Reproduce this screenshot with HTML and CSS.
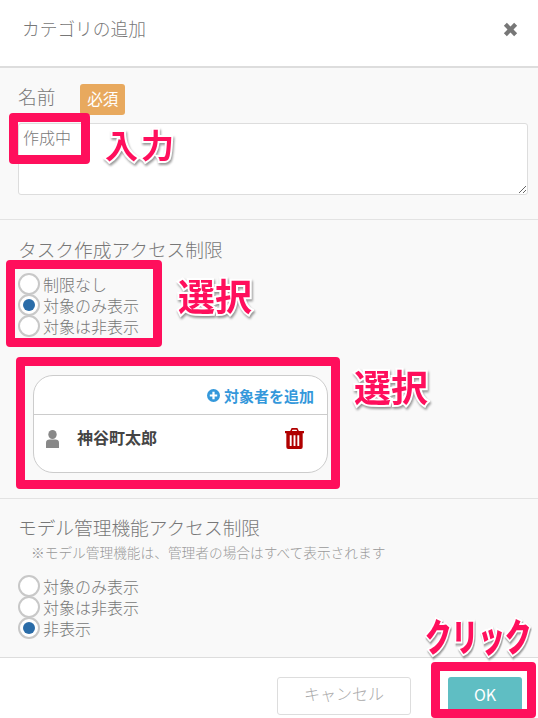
FILE: index.html
```html
<!DOCTYPE html>
<html lang="ja">
<head>
    <meta charset="UTF-8">
    <meta name="viewport" content="width=device-width, initial-scale=1.0">
    <title>カテゴリの追加</title>
    <link rel="stylesheet" href="styles.css">
</head>
<body>
    <div class="modal">
        <div class="modal-header">
            <span class="modal-title">カテゴリの追加</span>
            <svg class="close-icon" viewBox="0 0 14 14"><path d="M0.800 3.600 3.600 0.800 7 4.200l3.400-3.400 2.800 2.800L9.800 7l3.400 3.400-2.800 2.800L7 9.800l-3.400 3.400-2.800-2.800L4.200 7z"/></svg>
        </div>

        <div class="modal-body">
            <!-- Name -->
            <div class="section section-name">
                <div class="name-label">
                    <span class="label">名前</span>
                    <span class="badge">必須</span>
                </div>
                <textarea class="name-input" readonly>作成中</textarea>
            </div>

            <!-- Task access -->
            <div class="section section-task">
                <h3 class="label">タスク作成アクセス制限</h3>
                <div class="radio-row"><span class="radio"></span>制限なし</div>
                <div class="radio-row"><span class="radio checked"></span>対象のみ表示</div>
                <div class="radio-row"><span class="radio"></span>対象は非表示</div>

                <div class="target-card">
                    <div class="target-head">
                        <svg class="plus-icon" viewBox="0 0 14 14"><circle cx="7" cy="7" r="7"/><path class="plus-bar" d="M3 5.800h2.800V3h2.400v2.800H11v2.400H8.200V11H5.800V8.200H3z"/></svg>
                        <span>対象者を追加</span>
                    </div>
                    <div class="target-row">
                        <svg class="user-icon" viewBox="0 0 13 18"><ellipse cx="6.500" cy="4.500" rx="4.200" ry="4.500"/><path d="M0 18v-5.500C0 10.500 1.500 9.500 3.500 9.500h6c2 0 3.500 1 3.500 3V18z"/></svg>
                        <span class="target-name">神谷町太郎</span>
                        <svg class="trash-icon" viewBox="0 0 20 22"><path fill-rule="evenodd" d="M7 0h6l1.600 3H20v2.400h-1.400V20a2 2 0 0 1-2 2H3.400a2 2 0 0 1-2-2V5.400H0V3h5.400zM7.900 1.900 7.300 3h5.400l-.6-1.100zM5 7.500V19h2V7.500zM9 7.500V19h2V7.500zM13 7.500V19h2V7.500z"/></svg>
                    </div>
                </div>
            </div>

            <!-- Model access -->
            <div class="section section-model">
                <h3 class="label">モデル管理機能アクセス制限</h3>
                <p class="note">※モデル管理機能は、管理者の場合はすべて表示されます</p>
                <div class="radio-row"><span class="radio"></span>対象のみ表示</div>
                <div class="radio-row"><span class="radio"></span>対象は非表示</div>
                <div class="radio-row"><span class="radio checked"></span>非表示</div>
            </div>
        </div>

        <div class="modal-footer">
            <button class="btn btn-cancel">キャンセル</button>
            <button class="btn btn-ok">OK</button>
        </div>
    </div>

    <!-- Annotations drawn over the screenshot -->
    <div class="mark mark-name"></div>
    <div class="mark mark-radio"></div>
    <div class="mark mark-card"></div>
    <div class="mark mark-ok"></div>
    <div class="note-text note-input">入力</div>
    <div class="note-text note-select1">選択</div>
    <div class="note-text note-select2">選択</div>
    <div class="note-text note-click">クリック</div>
</body>
</html>
```

FILE: styles.css
```css
* {
    box-sizing: border-box;
    margin: 0;
    padding: 0;
}

body {
    position: relative;
    width: 538px;
    height: 718px;
    overflow: hidden;
    background: white;
    font-family: "Noto Sans CJK JP", "Noto Sans", sans-serif;
    font-weight: 300;
    color: #777;
}

.modal {
    display: flex;
    flex-direction: column;
    height: 718px;
}

.modal-header {
    display: flex;
    justify-content: space-between;
    align-items: center;
    height: 68px;
    padding: 0 20px 8px 22px;
    border-bottom: 2px solid #ddd;
}

.modal-title {
    font-size: 17.700px;
    line-height: 24px;
    margin-bottom: 2px;
}

.close-icon {
    width: 15px;
    height: 15px;
    fill: #777;
}

.modal-body {
    flex: 1;
    display: flex;
    flex-direction: column;
    background: #f9f9f9;
}

.section {
    padding-left: 18px;
    padding-right: 10px;
    border-bottom: 1px solid #e3e3e3;
}

.section-name {
    height: 152px;
    padding-top: 15px;
}

.section-task {
    height: 279px;
    padding-top: 16px;
}

.section-model {
    flex: 1;
    padding-top: 15px;
    border-bottom: none;
}

.name-label {
    display: flex;
    align-items: flex-start;
    gap: 25px;
    height: 40px;
}

.label {
    font-size: 18.700px;
    font-weight: 300;
    line-height: 26px;
}

.badge {
    width: 45px;
    height: 31px;
    margin-top: 1px;
    border-radius: 3px;
    background: #e8a95e;
    color: white;
    font-size: 15.500px;
    font-weight: 400;
    line-height: 28px;
    text-align: center;
}

.name-input {
    display: block;
    width: 510px;
    height: 72px;
    padding: 1px 4px;
    border: 1px solid #ddd;
    border-radius: 3px;
    background: white;
    color: #777;
    font-family: inherit;
    font-size: 16px;
    font-weight: 300;
    line-height: 24px;
    outline: none;
}

.radio-row {
    display: flex;
    align-items: center;
    gap: 3px;
    height: 20.700px;
    font-size: 16px;
    white-space: nowrap;
}

.section-task .label {
    margin-bottom: 12px;
}

.radio {
    position: relative;
    flex: none;
    width: 22px;
    height: 22px;
    border: 2px solid #c8c8c8;
    border-radius: 50%;
    background: white;
}

.radio.checked::after {
    content: "";
    position: absolute;
    top: 3px;
    left: 3px;
    width: 12px;
    height: 12px;
    border-radius: 50%;
    background: #2a6ca8;
}

.target-card {
    width: 295px;
    height: 98px;
    margin: 39px 0 0 15px;
    border: 1px solid #ccc;
    border-radius: 20px;
    background: white;
}

.target-head {
    display: flex;
    justify-content: flex-end;
    align-items: center;
    gap: 4px;
    height: 39px;
    padding-right: 13px;
    border-bottom: 1px solid #ccc;
    color: #3498db;
    font-size: 15px;
    font-weight: 700;
}

.plus-icon {
    width: 13px;
    height: 13px;
    fill: #3498db;
}

.plus-icon .plus-bar {
    fill: white;
}

.target-row {
    display: flex;
    align-items: center;
    height: 47px;
    padding-left: 12px;
}

.user-icon {
    width: 13px;
    height: 18px;
    margin-top: 1px;
    fill: #888;
}

.target-name {
    width: 208px;
    margin-left: 18px;
    margin-bottom: 3px;
    color: #444;
    font-size: 16px;
    font-weight: 700;
}

.trash-icon {
    width: 19px;
    height: 21px;
    fill: #b00000;
}

.note {
    margin: 2px 0 14px 13px;
    font-size: 13.700px;
    line-height: 20px;
    color: #999;
}

.modal-footer {
    display: flex;
    height: 61px;
    padding: 19px 0 0 277px;
    border-top: 1px solid #ddd;
    background: white;
}

.btn {
    padding-bottom: 6px;
    font-family: inherit;
    font-size: 16px;
    font-weight: 300;
    border-radius: 3px;
}

.btn-cancel {
    width: 134px;
    height: 38px;
    border: 1px solid #ddd;
    background: white;
    color: #aaa;
}

.btn-ok {
    width: 74px;
    height: 40px;
    margin-left: 37px;
    border: none;
    background: #5fbec3;
    color: white;
    font-weight: 400;
}

/* annotations */
.mark {
    position: absolute;
    border: 9px solid #ff0f5c;
    border-radius: 4px;
}

.mark-name {
    top: 113px;
    left: 9px;
    width: 81px;
    height: 51px;
}

.mark-radio {
    top: 260px;
    left: 6px;
    width: 156px;
    height: 87px;
}

.mark-card {
    top: 357px;
    left: 16px;
    width: 324px;
    height: 132px;
}

.mark-ok {
    top: 662px;
    left: 431px;
    width: 105px;
    height: 56px;
}

.note-text {
    position: absolute;
    color: #ff0f5c;
    font-weight: 700;
    line-height: 1;
    white-space: nowrap;
    -webkit-text-stroke: 4px white;
    paint-order: stroke fill;
    filter: drop-shadow(1px 2px 1px rgba(0, 0, 0, 0.4));
}

.note-input {
    top: 128px;
    left: 105px;
    font-size: 33px;
    letter-spacing: 3px;
}

.note-select1 {
    top: 277px;
    left: 178px;
    font-size: 37px;
}

.note-select2 {
    top: 368px;
    left: 354px;
    font-size: 37px;
}

.note-click {
    top: 616px;
    left: 425px;
    font-size: 38px;
    font-weight: 900;
    transform: scaleX(0.7);
    transform-origin: left top;
}
```
